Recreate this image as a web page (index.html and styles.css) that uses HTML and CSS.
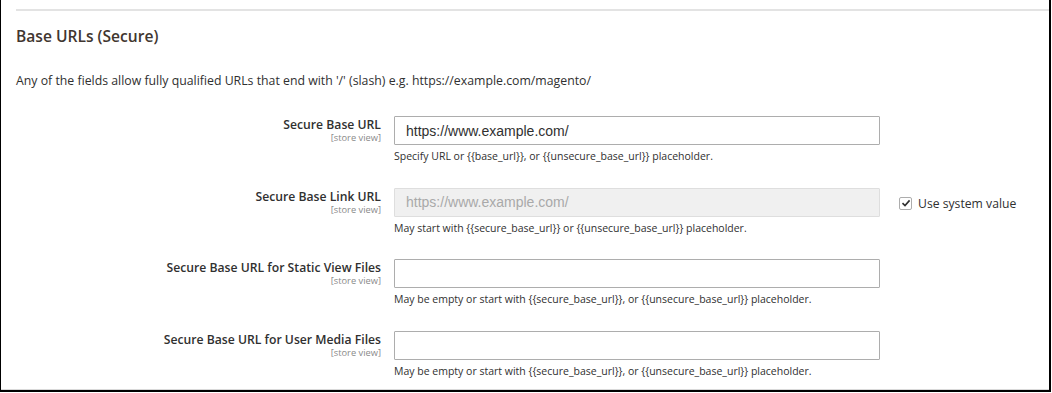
FILE: index.html
```html
<!DOCTYPE html>
<html lang="en">
<head>
  <meta charset="UTF-8">
  <title>Base URLs (Secure)</title>
  <link rel="stylesheet" href="styles.css">
</head>
<body>
  <div class="frame">
    <section class="config">
      <h2 class="config-title">Base URLs (Secure)</h2>
      <p class="config-comment">Any of the fields allow fully qualified URLs that end with '/' (slash) e.g. https://example.com/magento/</p>

      <div class="row">
        <div class="label">
          <span class="label-text">Secure Base URL</span>
          <span class="scope">[store view]</span>
        </div>
        <div class="value">
          <input class="field" type="text" value="https://www.example.com/">
          <p class="note">Specify URL or {{base_url}}, or {{unsecure_base_url}} placeholder.</p>
        </div>
      </div>

      <div class="row">
        <div class="label">
          <span class="label-text">Secure Base Link URL</span>
          <span class="scope">[store view]</span>
        </div>
        <div class="value">
          <input class="field" type="text" value="https://www.example.com/" disabled>
          <p class="note">May start with {{secure_base_url}} or {{unsecure_base_url}} placeholder.</p>
        </div>
        <label class="use-default">
          <span class="check">
            <svg width="10" height="10" viewBox="0 0 10 10"><path d="M1.5 5.2 L4 7.6 L8.6 2.4" fill="none" stroke="#303030" stroke-width="1.6"/></svg>
          </span>
          Use system value
        </label>
      </div>

      <div class="row">
        <div class="label">
          <span class="label-text">Secure Base URL for Static View Files</span>
          <span class="scope">[store view]</span>
        </div>
        <div class="value">
          <input class="field" type="text" value="">
          <p class="note">May be empty or start with {{secure_base_url}}, or {{unsecure_base_url}} placeholder.</p>
        </div>
      </div>

      <div class="row">
        <div class="label">
          <span class="label-text">Secure Base URL for User Media Files</span>
          <span class="scope">[store view]</span>
        </div>
        <div class="value">
          <input class="field" type="text" value="">
          <p class="note">May be empty or start with {{secure_base_url}}, or {{unsecure_base_url}} placeholder.</p>
        </div>
      </div>
    </section>
  </div>
</body>
</html>
```

FILE: styles.css
```css
/* Page frame */
body {
  margin: 0;
  background: #ffffff;
  font-family: 'Open Sans', 'DejaVu Sans', sans-serif;
  color: #303030;
}

.frame {
  width: 1048px;
  height: 390px;
  border-left: 1px solid #000000;
  border-right: 2px solid #000000;
  border-bottom: 2px solid #000000;
  box-shadow: inset 0 -1px 0 #d9d9d9;
  overflow: hidden;
}

/* Config section */
.config {
  margin: 9px 0 0 15px;
  border-top: 2px solid #e3e3e3;
}

.config-title {
  margin: 0;
  padding-top: 14px;
  font-size: 15.6px;
  font-weight: 600;
  color: #41362f;
  line-height: 22px;
}

.config-comment {
  margin: 25px 0 0;
  font-size: 12.3px;
  line-height: 17px;
  color: #303030;
}

/* Field rows */
.row {
  display: flex;
  align-items: flex-start;
  margin-top: 27px;
  height: 47px;
}

.row + .row {
  margin-top: 24.5px;
}

.label {
  width: 365px;
  display: flex;
  flex-direction: column;
  align-items: flex-end;
  padding-top: 1px;
}

.label-text {
  font-size: 12.2px;
  font-weight: 600;
  line-height: 15px;
  color: #303030;
}

.scope {
  font-size: 9.3px;
  line-height: 12px;
  color: #8a8a8a;
}

.value {
  margin-left: 13px;
  width: 486px;
}

.field {
  box-sizing: border-box;
  width: 486px;
  height: 29px;
  margin: 0;
  padding: 0 11px;
  border: 1px solid #adadad;
  border-radius: 1px;
  font-family: 'Liberation Sans', Arial, sans-serif;
  font-size: 14px;
  color: #303030;
  background: #ffffff;
  outline: none;
}

.field:disabled {
  background: #f0f0f0;
  border-color: #dedede;
  color: #a9a9a9;
}

.note {
  margin: 4px 0 0;
  font-size: 10.5px;
  line-height: 14px;
  color: #303030;
}

/* Use system value */
.use-default {
  display: flex;
  align-items: center;
  gap: 6px;
  margin: 7px 0 0 19px;
  font-size: 12.2px;
  color: #303030;
}

.check {
  box-sizing: border-box;
  width: 13px;
  height: 13px;
  border: 1px solid #adadad;
  border-radius: 2px;
  display: flex;
  align-items: center;
  justify-content: center;
  background: #ffffff;
}
```
